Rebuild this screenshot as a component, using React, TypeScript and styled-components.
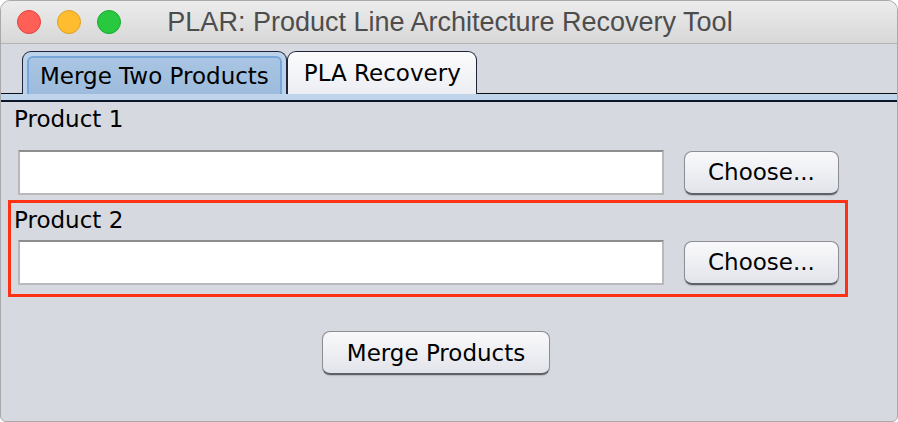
import React from "react";
import styled, { createGlobalStyle } from "styled-components";

const GlobalStyle = createGlobalStyle`
  html, body {
    margin: 0;
    padding: 0;
    background: #ffffff;
  }
  * {
    box-sizing: border-box;
  }
`;

const uiFont = `"DejaVu Sans", "Noto Sans", sans-serif`;

export default function App() {
  return (
    <>
      <GlobalStyle />
      <Window>
        <TitleBar>
          <Lights>
            <Light color="#fe5f57" edge="#e0443e" />
            <Light color="#febc2e" edge="#dea123" />
            <Light color="#28c840" edge="#1aab29" />
          </Lights>
          <Title>PLAR: Product Line Architecture Recovery Tool</Title>
        </TitleBar>

        <TabBar>
          <Tab selected>
            <TabInner selected>Merge Two Products</TabInner>
          </Tab>
          <Tab>
            <TabInner>PLA Recovery</TabInner>
          </Tab>
        </TabBar>
        <TabBand />

        <Form>
          <Section>
            <Label>Product 1</Label>
            <FieldRow>
              <TextField />
              <Button width={155}>Choose...</Button>
            </FieldRow>
          </Section>

          <Section highlighted>
            <Label>Product 2</Label>
            <FieldRow tight>
              <TextField />
              <Button width={155}>Choose...</Button>
            </FieldRow>
          </Section>

          <ActionRow>
            <Button width={228}>Merge Products</Button>
          </ActionRow>
        </Form>
      </Window>
    </>
  );
}

const Window = styled.div`
  width: 898px;
  height: 422px;
  display: flex;
  flex-direction: column;
  background: #d6d9e0;
  border: 1px solid #a9a9ab;
  border-radius: 10px 10px 6px 6px;
  overflow: hidden;
  font-family: ${uiFont};
`;

const TitleBar = styled.div`
  position: relative;
  height: 43px;
  flex: none;
  display: flex;
  align-items: center;
  justify-content: center;
  background: linear-gradient(#ececec, #d7d7d7);
  border-bottom: 1px solid #b4b4b4;
`;

const Lights = styled.div`
  position: absolute;
  left: 16px;
  top: 9px;
  display: flex;
  gap: 16px;
`;

const Light = styled.span<{ color: string; edge: string }>`
  width: 24px;
  height: 24px;
  border-radius: 50%;
  background: ${(p) => p.color};
  border: 1px solid ${(p) => p.edge};
`;

const Title = styled.div`
  font-family: "Liberation Sans", Arial, sans-serif;
  font-size: 27px;
  line-height: 30px;
  color: #4d4d4d;
  padding-left: 2px;
`;

const TabBar = styled.div`
  flex: none;
  height: 50px;
  display: flex;
  align-items: flex-end;
  padding-left: 21px;
  border-bottom: 1px solid #0d0f14;
`;

const Tab = styled.div<{ selected?: boolean }>`
  height: 43px;
  margin-bottom: -1px;
  padding: ${(p) => (p.selected ? "4px 4px 0" : "0")};
  border: 1.5px solid #1d2536;
  border-bottom: none;
  border-radius: 9px 9px 0 0;
  background: ${(p) =>
    p.selected ? "#bcd2ea" : "linear-gradient(#fbfbfd, #eceef3)"};
  z-index: ${(p) => (p.selected ? 1 : 0)};
`;

const TabInner = styled.div<{ selected?: boolean }>`
  height: 100%;
  display: flex;
  align-items: center;
  padding: ${(p) => (p.selected ? "0 11px" : "0 15px 0 16px")};
  font-size: 23px;
  color: #000;
  ${(p) =>
    p.selected &&
    `
    background: linear-gradient(#a9c5e3, #9dbbdc);
    border: 2px solid #77a7da;
    border-bottom: none;
    border-radius: 6px 6px 0 0;
  `}
`;

const TabBand = styled.div`
  flex: none;
  height: 8px;
  background: #c1d5ea;
  border-bottom: 2px solid #0d1526;
`;

const Form = styled.div`
  display: flex;
  flex-direction: column;
  padding: 1px 0 0 7px;
`;

const Section = styled.div<{ highlighted?: boolean }>`
  width: 840px;
  display: flex;
  flex-direction: column;
  border: 3px solid ${(p) => (p.highlighted ? "#fd3113" : "transparent")};
  padding: ${(p) => (p.highlighted ? "4px 3px 9px 3px" : "0 3px 1px 3px")};
  margin-top: ${(p) => (p.highlighted ? "1px" : "0")};
`;

const Label = styled.div`
  font-size: 23px;
  line-height: 26px;
  color: #000;
`;

const FieldRow = styled.div<{ tight?: boolean }>`
  display: flex;
  align-items: center;
  gap: 20px;
  padding-left: 4px;
  margin-top: ${(p) => (p.tight ? "7px" : "18px")};
`;

const TextField = styled.div`
  width: 646px;
  height: 45px;
  background: #ffffff;
  border: 2px solid #b9b9b9;
  border-top-color: #8d8d8d;
`;

const Button = styled.button<{ width: number }>`
  width: ${(p) => p.width}px;
  height: 44px;
  padding: 0;
  font-family: ${uiFont};
  font-size: 23px;
  color: #000;
  background: linear-gradient(#f9f9fb 0%, #eeeff3 50%, #e2e4eb 100%);
  border: 1px solid #8c8e93;
  border-bottom: 2px solid #5f6166;
  border-radius: 8px;
  box-shadow: 0 1px 1px rgba(0, 0, 0, 0.15);
`;

const ActionRow = styled.div`
  display: flex;
  margin-top: 34px;
  padding-left: 314px;
`;
